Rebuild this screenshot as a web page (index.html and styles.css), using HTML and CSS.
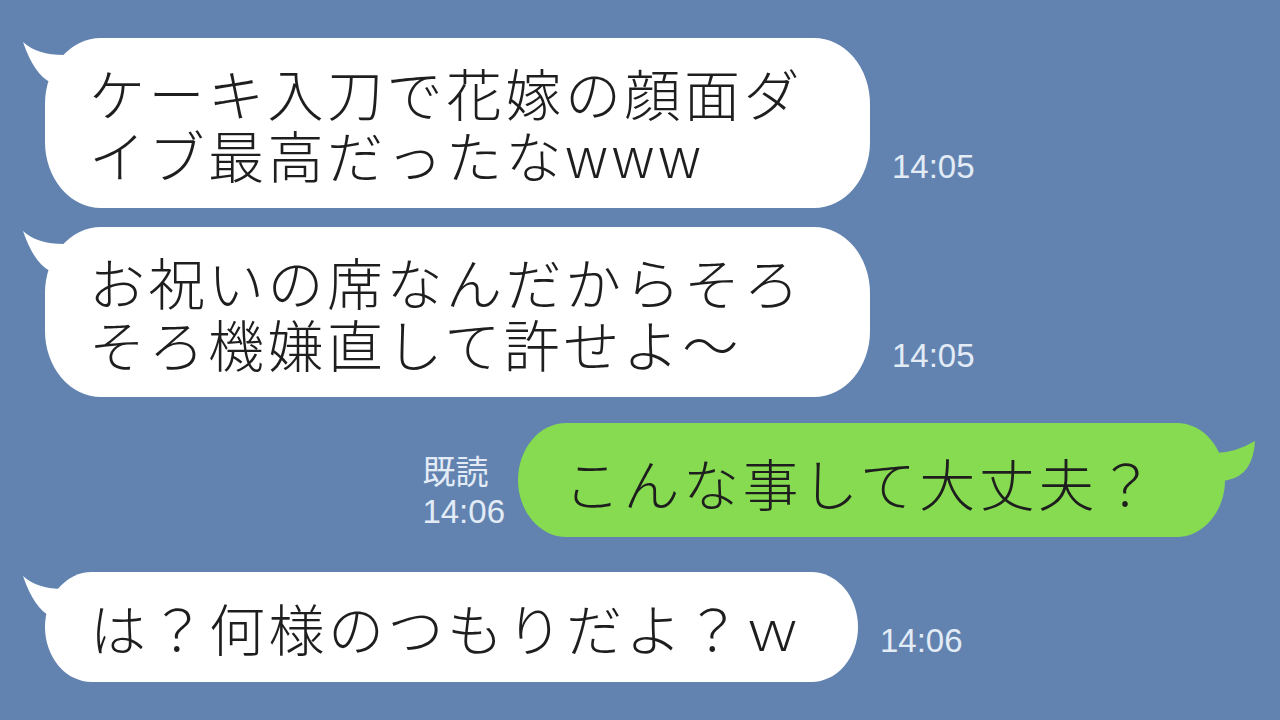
FILE: index.html
```html
<!DOCTYPE html>
<html lang="ja">
<head>
    <meta charset="UTF-8">
    <meta name="viewport" content="width=device-width, initial-scale=1.0">
    <title>トーク</title>
    <link rel="stylesheet" href="styles.css">
</head>
<body>
    <div class="chat">
        <!-- received -->
        <div class="row">
            <div class="bubble in">
                <svg class="tail" width="70" height="64" viewBox="0 0 70 64"><path d="M3 4 Q18 18 48 17 L62 6 L72 30 L62 64 L30 44 Q14 36 3 4 Z"/></svg>
                ケーキ入刀で花嫁の顔面ダ<br>イブ最高だったなwww
            </div>
            <div class="time">14:05</div>
        </div>

        <div class="row gap-2">
            <div class="bubble in">
                <svg class="tail" width="70" height="64" viewBox="0 0 70 64"><path d="M3 4 Q18 18 48 17 L62 6 L72 30 L62 64 L30 44 Q14 36 3 4 Z"/></svg>
                お祝いの席なんだからそろ<br>そろ機嫌直して許せよ～
            </div>
            <div class="time">14:05</div>
        </div>

        <!-- sent -->
        <div class="row mine">
            <div class="meta">
                <div>既読</div>
                <div>14:06</div>
            </div>
            <div class="bubble out">
                <svg class="tail" width="60" height="70" viewBox="0 0 60 70"><path d="M58 18 Q38 30 18 30 L6 16 L6 62 L31 57 Q56 52 58 18 Z"/></svg>
                こんな事して大丈夫？
            </div>
        </div>

        <div class="row gap-4">
            <div class="bubble in short">
                <svg class="tail" width="70" height="64" viewBox="0 0 70 64"><path d="M3 4 Q18 18 48 17 L62 6 L72 30 L62 64 L30 44 Q14 36 3 4 Z"/></svg>
                は？何様のつもりだよ？ｗ
            </div>
            <div class="time">14:06</div>
        </div>
    </div>
</body>
</html>
```

FILE: styles.css
```css
body {
    margin: 0;
    background-color: #6283b0;
    font-family: "Noto Sans CJK JP", "Noto Sans", sans-serif;
    overflow: hidden;
}

.chat {
    display: flex;
    flex-direction: column;
    padding: 38px 0 0 45px;
    height: 720px;
    box-sizing: border-box;
}

.row {
    display: flex;
    align-items: flex-end;
    gap: 22px;
}

.gap-2 {
    margin-top: 19px;
}

.mine {
    margin-top: 26px;
    justify-content: flex-end;
    padding-right: 55px;
    gap: 13px;
}

.gap-4 {
    margin-top: 35px;
}

.bubble {
    position: relative;
    box-sizing: border-box;
    font-size: 56px;
    font-weight: 300;
    line-height: 62px;
    letter-spacing: 3.5px;
    color: #1e1e1e;
    border-radius: 56px / 66px;
    white-space: nowrap;
}

.bubble .tail {
    position: absolute;
    top: 0;
}

.in {
    width: 825px;
    background: #fff;
    padding: 23px 20px 23px 44px;
}

.in .tail {
    left: -25px;
    fill: #fff;
}

.short {
    width: 813px;
    padding: 24px 20px 24px 45px;
}

.out {
    width: 707px;
    background: #86db50;
    padding: 28px 20px 24px 46px;
}

.out .tail {
    right: -32px;
    fill: #86db50;
}

.time {
    font-family: "Liberation Sans", Arial, sans-serif;
    font-size: 33px;
    line-height: 33px;
    color: #e3ecf6;
    margin-bottom: 25px;
}

.meta {
    font-family: "Liberation Sans", "Noto Sans CJK JP", sans-serif;
    font-size: 33px;
    line-height: 39px;
    color: #e3ecf6;
    margin-bottom: 6px;
}
```
